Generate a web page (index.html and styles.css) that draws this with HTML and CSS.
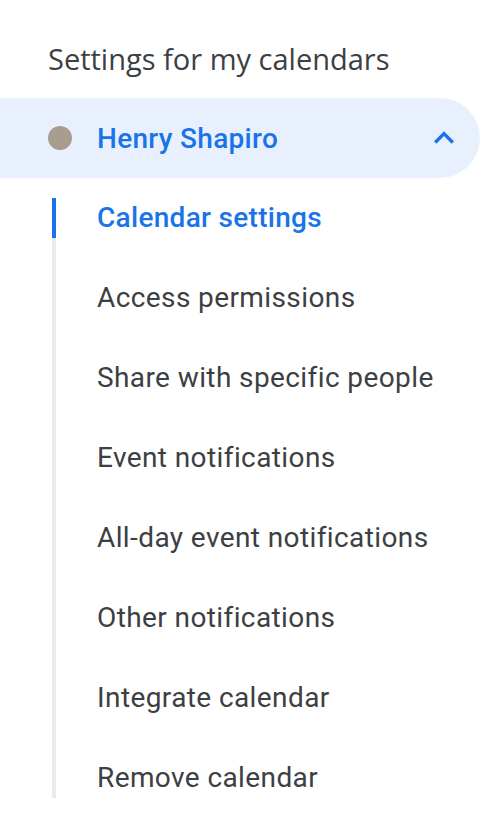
FILE: index.html
```html
<!DOCTYPE html>
<html>
<head>
  <meta charset="UTF-8">
  <title>Settings for my calendars</title>
  <link rel="stylesheet" href="styles.css">
</head>
<body>
  <h1 class="title">Settings for my calendars</h1>
  <div class="calendar">
    <span class="dot"></span>
    <span class="name">Henry Shapiro</span>
    <svg class="chevron" viewBox="0 0 24 24" width="40" height="40">
      <path d="M12 8l-6 6 1.41 1.41L12 10.83l4.59 4.58L18 14z" fill="#1a73e8"/>
    </svg>
  </div>
  <ul class="menu">
    <li class="active">Calendar settings</li>
    <li>Access permissions</li>
    <li>Share with specific people</li>
    <li>Event notifications</li>
    <li>All-day event notifications</li>
    <li>Other notifications</li>
    <li>Integrate calendar</li>
    <li>Remove calendar</li>
  </ul>
</body>
</html>
```
FILE: styles.css
```css
body {
  margin: 0;
  background: #ffffff;
  font-family: Roboto, Arial, sans-serif;
  color: #3c4043;
}
.title {
  font-family: "Open Sans", Arial, sans-serif;
  font-size: 29px;
  font-weight: 500;
  color: #3c4043;
  margin: 0px;
  padding: 40px 0px 0px 48px;
  height: 58px;
  line-height: 38px;
}
.calendar {
  display: flex;
  align-items: center;
  width: 480px;
  height: 80px;
  box-sizing: border-box;
  background: #e8f0fe;
  border-radius: 0px 40px 40px 0px;
  padding: 0px 16px 0px 48px;
}
.dot {
  width: 24px;
  height: 24px;
  border-radius: 50%;
  background: #a89c8f;
  margin-right: 25px;
  flex: none;
}
.name {
  flex: 1;
  font-size: 28px;
  font-weight: 500;
  letter-spacing: 0.3px;
  color: #1a73e8;
}
.chevron {
  flex: none;
}
.menu {
  list-style: none;
  margin: 20px 0px 0px 52px;
  padding: 0px;
  border-left: 4px solid #e8eaed;
  display: flex;
  flex-direction: column;
  gap: 40px;
}
.menu li {
  height: 40px;
  line-height: 40px;
  margin-left: -4px;
  border-left: 4px solid transparent;
  padding-left: 41px;
  font-size: 28px;
  letter-spacing: 0.4px;
  color: #3c4043;
}
.menu li.active {
  border-left-color: #1a73e8;
  color: #1a73e8;
  font-weight: 500;
  letter-spacing: 0.3px;
}
```
